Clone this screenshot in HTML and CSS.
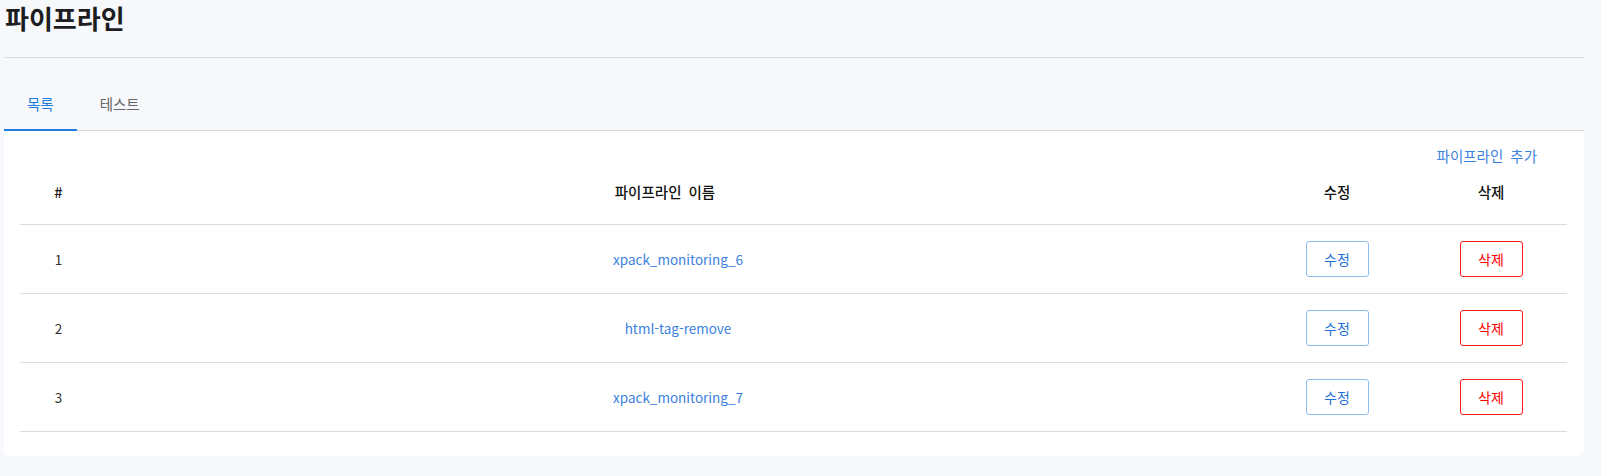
FILE: index.html
```html
<!DOCTYPE html>
<html lang="ko">
<head>
<meta charset="utf-8">
<title>파이프라인</title>
<link rel="stylesheet" href="styles.css">
</head>
<body>
<div class="page">
  <header class="page-header">
    <h1 class="page-title">파이프라인</h1>
  </header>
  <nav class="tabs">
    <a class="tab tab-active">목록</a>
    <a class="tab">테스트</a>
  </nav>
  <section class="card">
    <div class="card-actions">
      <a class="add-link">파이프라인 추가</a>
    </div>
    <table class="grid">
      <colgroup>
        <col class="col-num">
        <col class="col-name">
        <col class="col-edit">
        <col class="col-del">
      </colgroup>
      <thead>
        <tr>
          <th>#</th>
          <th class="th-name">파이프라인 이름</th>
          <th>수정</th>
          <th>삭제</th>
        </tr>
      </thead>
      <tbody>
        <tr>
          <td class="num">1</td>
          <td><a class="name-link">xpack_monitoring_6</a></td>
          <td><button class="btn btn-edit">수정</button></td>
          <td><button class="btn btn-del">삭제</button></td>
        </tr>
        <tr>
          <td class="num">2</td>
          <td><a class="name-link">html-tag-remove</a></td>
          <td><button class="btn btn-edit">수정</button></td>
          <td><button class="btn btn-del">삭제</button></td>
        </tr>
        <tr>
          <td class="num">3</td>
          <td><a class="name-link">xpack_monitoring_7</a></td>
          <td><button class="btn btn-edit">수정</button></td>
          <td><button class="btn btn-del">삭제</button></td>
        </tr>
      </tbody>
    </table>
  </section>
</div>
</body>
</html>
```
FILE: styles.css
```css
* { box-sizing: border-box; }

html, body {
  margin: 0;
  padding: 0;
  background: #f7f8fc;
  font-family: "Noto Sans CJK KR", "Noto Sans", sans-serif;
  color: #222;
}

.page {
  padding: 0 17px 0 4px;
}

.page-header {
  height: 58px;
  border-bottom: 1px solid #dcdde2;
}

.page-title {
  margin: 0;
  padding-left: 1px;
  font-size: 26px;
  line-height: 35px;
  font-weight: 700;
  color: #1d1d1f;
}

.tabs {
  display: flex;
  margin-top: 21px;
  border-bottom: 1px solid #d8d9de;
}

.tab {
  height: 52px;
  padding: 0 23px 2px;
  display: flex;
  align-items: center;
  justify-content: center;
  font-size: 14.5px;
  color: #666;
  border-bottom: 2px solid transparent;
  margin-bottom: -1px;
}

.tab-active {
  color: #1e7be0;
  border-bottom-color: #1e7be0;
}

.card {
  background: #fff;
  border-radius: 0 0 5px 5px;
  padding: 14px 17px 24px 16px;
}

.card-actions {
  display: flex;
  justify-content: flex-end;
  padding-right: 30px;
  height: 20px;
  align-items: center;
}

.add-link {
  font-size: 14.5px;
  word-spacing: 3px;
  color: #3b82e0;
}

.grid {
  width: 100%;
  border-collapse: collapse;
  table-layout: fixed;
  font-size: 13.5px;
}

.col-num { width: 77px; }
.col-edit { width: 156px; }
.col-del { width: 152px; }

.grid th {
  height: 59px;
  padding: 0 0 5px 0;
  font-size: 14.5px;
  word-spacing: 3px;
  font-weight: 500;
  color: #111;
  text-align: center;
  vertical-align: middle;
  border-bottom: 1px solid #dcdcdc;
}

.grid th.th-name {
  padding-right: 26px;
}

.grid td {
  height: 69px;
  padding: 0;
  text-align: center;
  vertical-align: middle;
  border-bottom: 1px solid #dcdcdc;
}

.num {
  color: #333;
}

.name-link {
  color: #3b82e0;
}

.btn {
  width: 63px;
  height: 36px;
  border-radius: 3px;
  background: #fff;
  font-family: inherit;
  font-size: 14px;
  padding: 0;
  cursor: pointer;
}

.btn-edit {
  border: 1px solid #8fbcef;
  color: #1f6fd6;
}

.btn-del {
  border: 1px solid #ff1a1a;
  color: #ff0000;
}
```
